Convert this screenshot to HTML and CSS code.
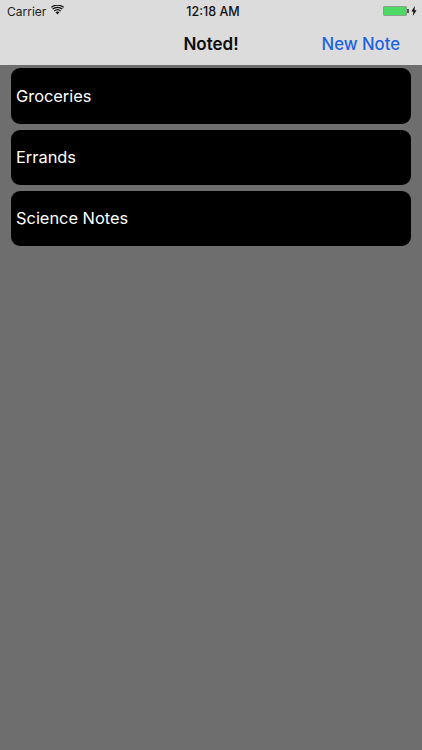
FILE: index.html
```html
<!DOCTYPE html>
<html lang="en">
<head>
<meta charset="utf-8">
<title>Noted!</title>
<link rel="stylesheet" href="styles.css">
</head>
<body>
<header class="top">
  <div class="status">
    <div class="status-left">
      <span class="carrier">Carrier</span>
      <svg class="wifi" width="13" height="10" viewBox="0 0 13 10"><path d="M6.5 9.6 4.5 7.3a3 3 0 0 1 4 0Z" fill="#111"/><path d="M3.3 6A5 5 0 0 1 9.7 6" fill="none" stroke="#111" stroke-width="1.3"/><path d="M1.6 4.1A7.6 7.6 0 0 1 11.4 4.1" fill="none" stroke="#111" stroke-width="1.3"/><path d="M.3 2.4A9.6 9.6 0 0 1 12.7 2.4" fill="none" stroke="#111" stroke-width="1.2"/></svg>
    </div>
    <span class="time">12:18 AM</span>
    <div class="status-right">
      <span class="battery"></span>
      <span class="nub"></span>
      <svg class="bolt" width="6" height="10" viewBox="0 0 6 10"><path d="M3.8 0 .4 5.6h2L1.8 10 5.6 4.2h-2.1Z" fill="#111"/></svg>
    </div>
  </div>
  <nav class="nav">
    <h1 class="title">Noted!</h1>
    <a class="action">New Note</a>
  </nav>
</header>
<main class="list">
  <div class="note">Groceries</div>
  <div class="note">Errands</div>
  <div class="note">Science Notes</div>
</main>
</body>
</html>
```
FILE: styles.css
```css
* { box-sizing: border-box; }
html, body { margin: 0; height: 100%; }
body {
  width: 422px;
  height: 750px;
  overflow: hidden;
  background: #6e6e6e;
  font-family: Inter, "Liberation Sans", sans-serif;
  display: flex;
  flex-direction: column;
}
.top {
  height: 65px;
  background: #dcdcdc;
  flex: none;
}
.status {
  height: 22px;
  display: grid;
  grid-template-columns: 1fr auto 1fr;
  align-items: center;
  padding: 0 1px 0 7px;
  color: #111;
  font-size: 12px;
}
.status-left { display: flex; align-items: center; gap: 5px; }
.carrier { color: #222; }
.wifi { margin-top: -2px; }
.time { font-weight: 500; font-size: 12.5px; margin-right: 2px; }
.status-right { display: flex; align-items: center; justify-content: flex-end; }
.battery {
  width: 24px;
  height: 10px;
  border-radius: 2px;
  background: #4cd964;
  box-shadow: inset 0 0 0 1px #8fa08f;
}
.nub { width: 2px; height: 4px; background: #555; margin: 0 2px 0 0; }
.bolt { display: block; margin-right: 4px; }
.nav {
  height: 43px;
  display: flex;
  align-items: center;
  justify-content: flex-end;
  position: relative;
  padding: 0 22px 0 0;
}
.title {
  position: absolute;
  left: 0;
  right: 0;
  margin: 0;
  text-align: center;
  font-size: 17px;
  font-weight: 600;
  color: #0c0c0c;
}
.action {
  position: relative;
  color: #1c63e0;
  font-size: 16.7px;
  font-weight: 500;
}
.list {
  padding: 3.4px 11px 0;
  display: flex;
  flex-direction: column;
  gap: 6px;
}
.note {
  height: 55.2px;
  background: #000;
  border-radius: 9px;
  color: #fff;
  font-size: 16.4px;
  display: flex;
  align-items: center;
  padding: 0 0 0 5px;
}
```
